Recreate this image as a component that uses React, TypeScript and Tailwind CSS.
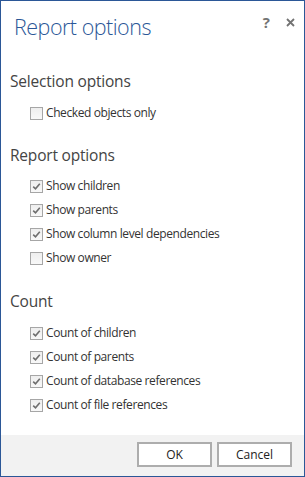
import React from 'react';

const font = { fontFamily: '"Open Sans", "Noto Sans", sans-serif' };

const Box: React.FC<{ checked: boolean }> = ({ checked }) => (
  <span className="w-[13px] h-[13px] border border-[#a6a6a6] bg-gradient-to-b from-[#eeeeee] to-[#f8f8f8] flex items-center justify-center shrink-0">
    {checked && (
      <svg width="9" height="9" viewBox="0 0 9 9">
        <path d="M1.2 4.6 L3.5 6.8 L7.8 1.8" fill="none" stroke="#6e6e6e" strokeWidth="1.6" />
      </svg>
    )}
  </span>
);

const Row: React.FC<{ label: string; checked: boolean }> = ({ label, checked }) => (
  <div className="h-[24px] flex items-center pl-[29px] gap-[3px]">
    <Box checked={checked} />
    <span className="text-[12px] text-[#333333] tracking-[-0.4px]">{label}</span>
  </div>
);

const Heading: React.FC<{ text: string; className?: string }> = ({ text, className }) => (
  <div className={`h-[24px] leading-[24px] pl-[9px] text-[15.5px] text-[#444444] tracking-[-0.2px] ${className ?? ''}`}>{text}</div>
);

export default function App() {
  return (
    <div style={font} className="w-[305px] h-[477px] border border-[#2b5797] bg-white flex flex-col">
      <div className="flex-1 flex flex-col">
        <div className="flex items-start justify-between pt-[9px] pl-[13px] pr-[9px]">
          <div className="text-[21.5px] leading-[34px] font-light text-[#2b5797] tracking-[-0.5px]">Report options</div>
          <div className="flex items-center gap-[16px] pt-[1px] text-[#737373] font-bold text-[15px]">
            <span>?</span>
            <svg width="9" height="9" viewBox="0 0 9 9">
              <path d="M1 1 L8 8 M8 1 L1 8" stroke="#737373" strokeWidth="1.8" />
            </svg>
          </div>
        </div>

        <Heading text="Selection options" className="mt-[25px]" />
        <div className="mt-[8px]">
          <Row label="Checked objects only" checked={false} />
        </div>

        <Heading text="Report options" className="mt-[18px]" />
        <div className="mt-[7px]">
          <Row label="Show children" checked />
          <Row label="Show parents" checked />
          <Row label="Show column level dependencies" checked />
          <Row label="Show owner" checked={false} />
        </div>

        <Heading text="Count" className="mt-[19px]" />
        <div className="mt-[8px]">
          <Row label="Count of children" checked />
          <Row label="Count of parents" checked />
          <Row label="Count of database references" checked />
          <Row label="Count of file references" checked />
        </div>
      </div>

      <div className="h-[41px] bg-[#f2f2f2] flex items-start justify-end gap-[5px] pt-[7px] pr-[12px]">
        <button className="w-[75px] h-[25px] border-2 border-[#adadad] bg-white text-[12px] text-[#222222]">OK</button>
        <button className="w-[75px] h-[25px] border-2 border-[#adadad] bg-white text-[12px] text-[#222222]">Cancel</button>
      </div>
    </div>
  );
}
